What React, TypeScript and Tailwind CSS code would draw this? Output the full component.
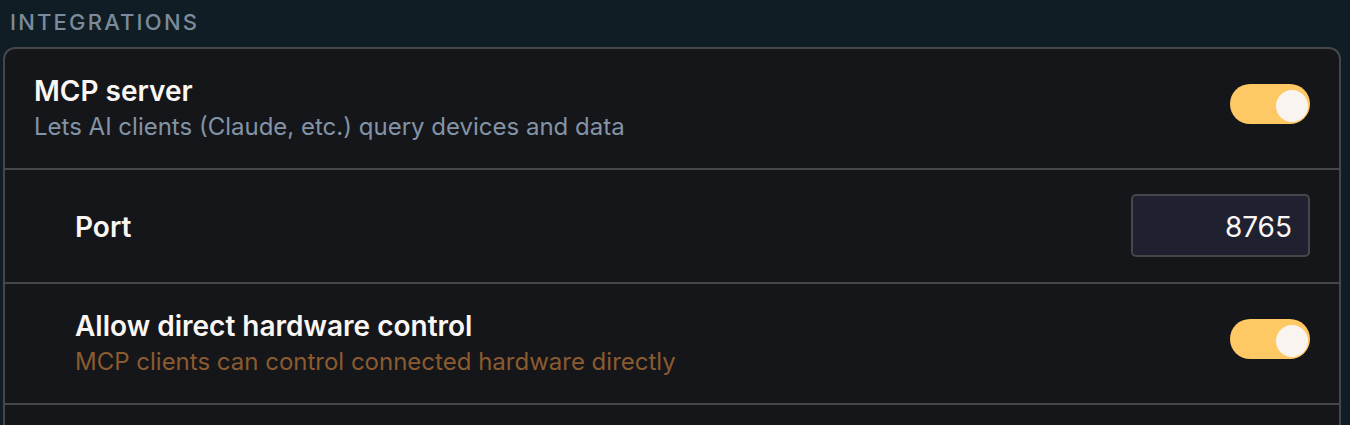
import React from "react";

function Toggle() {
  return (
    <div className="mb-[10px] flex h-[40px] w-[80px] items-center justify-end rounded-full bg-[#fec864] pr-[2px]">
      <div className="h-[32px] w-[32px] translate-y-[2px] rounded-full bg-[#faf4f1]" />
    </div>
  );
}

export default function App() {
  return (
    <div
      className="h-[425px] w-[1350px] overflow-hidden bg-[#111d24] pl-[3px] pr-[9px]"
      style={{ fontFamily: "Inter, 'Noto Sans', sans-serif" }}
    >
      <div className="flex h-[47px] items-center pl-[7px] pb-[3px] text-[22px] font-medium uppercase tracking-[0.1em] text-[#7b8b9b]">
        Integrations
      </div>
      <div className="rounded-t-[12px] border-2 border-b-0 border-[#45474b] bg-[#15161a]">
        <div className="flex h-[121px] items-center justify-between border-b-2 border-[#45474b] pl-[29px] pr-[29px]">
          <div className="flex flex-col">
            <div className="text-[28px] font-semibold leading-[36px] text-[#faf6f3]">MCP server</div>
            <div className="text-[24px] leading-[36px] text-[#8294a5]">
              Lets AI clients (Claude, etc.) query devices and data
            </div>
          </div>
          <Toggle />
        </div>
        <div className="flex h-[114px] items-center justify-between border-b-2 border-[#45474b] pl-[70px] pr-[29px]">
          <div className="pt-[2px] text-[28px] font-semibold text-[#faf6f3]">Port</div>
          <div className="mb-[2px] flex h-[63px] w-[179px] items-center justify-end rounded-[5px] border-2 border-[#45474b] bg-[#1f2131] pr-[16px] pt-[4px] text-[28px] text-[#faf6f3]">
            8765
          </div>
        </div>
        <div className="flex h-[121px] items-center justify-between border-b-2 border-[#45474b] pl-[70px] pr-[29px]">
          <div className="flex flex-col">
            <div className="text-[28px] font-semibold leading-[36px] text-[#faf6f3]">
              Allow direct hardware control
            </div>
            <div className="text-[24px] leading-[36px] text-[#8b5b2f]">
              MCP clients can control connected hardware directly
            </div>
          </div>
          <Toggle />
        </div>
        <div className="h-[40px]" />
      </div>
    </div>
  );
}
